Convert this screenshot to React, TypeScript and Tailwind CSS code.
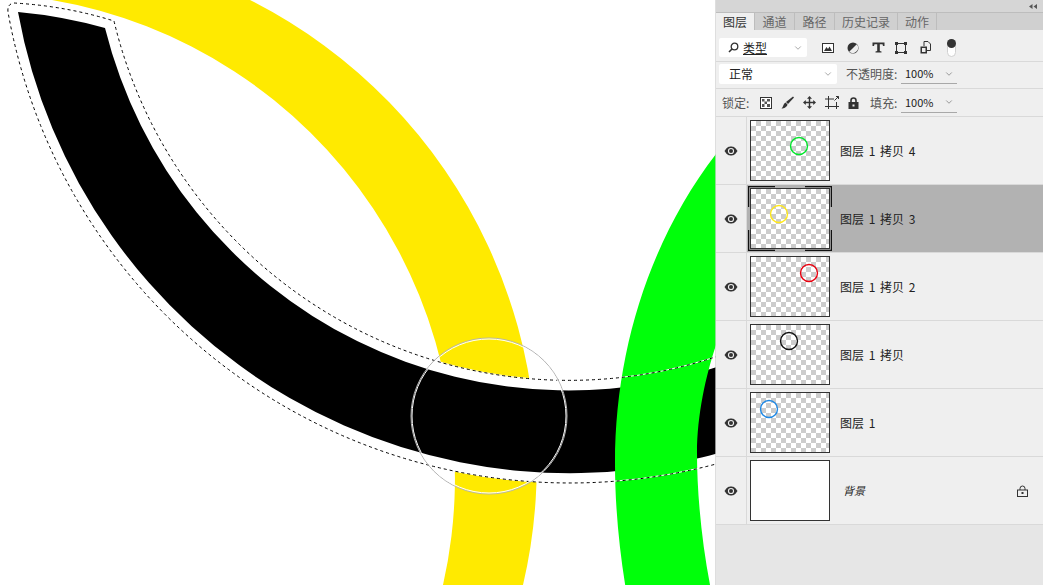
import React from "react";
import { ChevronDown } from "lucide-react";

const FONT = '"Noto Sans CJK SC", "Noto Sans", sans-serif';

interface Layer {
  name: string;
  ring?: string;
  cx?: number;
  cy?: number;
  selected?: boolean;
  background?: boolean;
}

const layers: Layer[] = [
  { name: "图层 1 拷贝 4", ring: "#00e62a", cx: 48, cy: 25 },
  { name: "图层 1 拷贝 3", ring: "#ffe81a", cx: 28, cy: 25, selected: true },
  { name: "图层 1 拷贝 2", ring: "#e8000f", cx: 58, cy: 16 },
  { name: "图层 1 拷贝", ring: "#111111", cx: 38, cy: 16 },
  { name: "图层 1", ring: "#1e88e5", cx: 18, cy: 16 },
  { name: "背景", background: true },
];

function Canvas() {
  const blackBand =
    "M18 12 Q62 16 105 28 A478 478 0 0 0 760 350.6 L760 440 A561 561 0 0 1 18 12 Z";
  const marquee =
    "M14 3 Q66 6 114 21 A468 468 0 0 0 760 339.7 M760 450.5 A571 571 0 0 1 8 12 Q7 4 14 3";
  return (
    <svg width="716" height="585" viewBox="0 0 716 585" className="block shrink-0 bg-white">
      <path d="M52 0 L250 0 A522 522 0 0 1 523 585 L443 585 A485 485 0 0 0 52 0 Z" fill="#ffea00" />
      <path d={blackBand} fill="#000" stroke="#fff" strokeWidth="20" strokeLinejoin="round" />
      <path d={blackBand} fill="#000" />
      <path
        d="M716 154 C650 240 615 350 615 463 C615 505 619 548 626 590 L711 590 C702 545 697 495 697 453 C697 415 706 375 716 345 Z"
        fill="#00ff0a"
      />
      <path d={marquee} fill="none" stroke="#fff" strokeWidth="1" />
      <path d={marquee} fill="none" stroke="#000" strokeWidth="1" strokeDasharray="3 3" />
      <circle cx="489" cy="416" r="78" fill="none" stroke="#b4b4b4" strokeWidth="1" />
      <circle cx="489" cy="416" r="77" fill="none" stroke="#fff" strokeWidth="1" />
      <rect x="715" y="0" width="1" height="585" fill="#d0d0d0" fillOpacity="0.7" />
    </svg>
  );
}

function EyeIcon() {
  return (
    <svg width="14" height="10" viewBox="0 0 14 10">
      <path d="M0.5 5 C3 1 5 0.5 7 0.5 C9 0.5 11 1 13.5 5 C11 9 9 9.5 7 9.5 C5 9.5 3 9 0.5 5 Z" fill="#333" />
      <circle cx="7" cy="5" r="3.1" fill="#eee" />
      <circle cx="7" cy="5" r="2" fill="#333" />
    </svg>
  );
}

function ToolIcons() {
  return (
    <div className="ml-[15px] flex h-[19px] items-center gap-[13px]">
      <svg width="12" height="10" viewBox="0 0 12 10">
        <rect x="0.5" y="0.5" width="11" height="9" fill="#fff" stroke="#333" />
        <path d="M2 8 L4.5 4 L6 6 L7.5 3.5 L10 8 Z" fill="#333" />
      </svg>
      <svg width="12" height="12" viewBox="0 0 12 12">
        <circle cx="6" cy="6" r="5.5" fill="#333" />
        <path d="M9.8 2.2 A5.4 5.4 0 0 1 2.2 9.8 Z" fill="#eee" />
      </svg>
      <svg width="13" height="11" viewBox="0 0 13 11">
        <path d="M0.5 0.5 H12.5 V4 H11 L10.5 2.2 H7.8 V9 L9.5 9.4 V10.5 H3.5 V9.4 L5.2 9 V2.2 H2.5 L2 4 H0.5 Z" fill="#333" />
      </svg>
      <svg width="12" height="12" viewBox="0 0 12 12" className="ml-[-3px]">
        <rect x="1.5" y="1.5" width="9" height="9" fill="none" stroke="#333" />
        <rect x="0" y="0" width="3" height="3" fill="#333" />
        <rect x="9" y="0" width="3" height="3" fill="#333" />
        <rect x="0" y="9" width="3" height="3" fill="#333" />
        <rect x="9" y="9" width="3" height="3" fill="#333" />
      </svg>
      <svg width="11" height="13" viewBox="0 0 11 13">
        <path d="M4 5 V0.5 H8 L10.5 3 V9.5 H7" fill="none" stroke="#333" />
        <rect x="0.5" y="5.5" width="6.5" height="7" fill="#333" />
        <rect x="2" y="7" width="3.5" height="4" fill="#eee" />
      </svg>
    </div>
  );
}

function LockIcons() {
  return (
    <div className="flex items-center gap-[9px]">
      <svg width="12" height="12" viewBox="0 0 12 12">
        <rect x="0.5" y="0.5" width="11" height="11" fill="#fff" stroke="#333" />
        <path d="M2 2 H4.5 V4.5 H2 Z M7 2 H10 V4.5 H7 Z M4.5 4.5 H7 V7 H4.5 Z M2 7 H4.5 V10 H2 Z M7 7 H10 V10 H7 Z" fill="#555" />
      </svg>
      <svg width="13" height="13" viewBox="0 0 13 13">
        <path d="M12 0.5 L13 1.5 L7 8 L5 6 Z" fill="#333" />
        <path d="M4.5 6.5 L6.5 8.5 C6 11 3 12.5 0.5 12.5 C2.5 11 2 8 4.5 6.5 Z" fill="#333" />
      </svg>
      <svg width="13" height="13" viewBox="0 0 13 13">
        <path d="M6.5 0 L9 2.8 H7.2 V5.8 H10.2 V4 L13 6.5 L10.2 9 V7.2 H7.2 V10.2 H9 L6.5 13 L4 10.2 H5.8 V7.2 H2.8 V9 L0 6.5 L2.8 4 V5.8 H5.8 V2.8 H4 Z" fill="#333" />
      </svg>
      <svg width="14" height="13" viewBox="0 0 14 13">
        <path d="M3.5 0 V13 M11.5 6 V13 M0 3 H9 M0 10.5 H14" fill="none" stroke="#333" />
        <path d="M9.5 4.5 L13.5 0.5 M11 0.5 H13.5 V3" fill="none" stroke="#333" />
      </svg>
      <svg width="11" height="12" viewBox="0 0 11 12">
        <path d="M3 5 V3.5 A2.5 2.5 0 0 1 8 3.5 V5" fill="none" stroke="#333" strokeWidth="1.6" />
        <rect x="0.5" y="5" width="10" height="7" fill="#333" />
        <rect x="4.5" y="7.5" width="2" height="2" fill="#eee" />
      </svg>
    </div>
  );
}

function Thumb({ layer }: { layer: Layer }) {
  return (
    <div className="relative h-[61px] w-[80px] shrink-0">
      {layer.background ? (
        <div className="h-full w-full border border-[#333] bg-white" />
      ) : (
        <div className="relative h-full w-full border border-[#333] bg-[repeating-conic-gradient(#cccccc_0_25%,#ffffff_0_50%)] bg-[length:10px_10px]">
          <svg width="78" height="59" viewBox="0 0 78 59" className="absolute left-0 top-0">
            <circle cx={layer.cx} cy={layer.cy} r="8.5" fill="none" stroke={layer.ring} strokeWidth="1.4" />
          </svg>
        </div>
      )}
      {layer.selected && (
        <svg width="84" height="65" viewBox="0 0 84 65" className="absolute left-[-2px] top-[-2px]">
          <path
            d="M0.5 21 V0.5 H27 M57 0.5 H83.5 V21 M83.5 44 V64.5 H57 M27 64.5 H0.5 V44"
            fill="none"
            stroke="#111"
            strokeWidth="1.4"
          />
        </svg>
      )}
    </div>
  );
}

function LayerRow({ layer }: { layer: Layer }) {
  return (
    <div className="flex h-[68px] border-b border-[#d9d9d9]">
      <div className="flex w-[31px] shrink-0 items-center justify-center border-r border-[#d9d9d9]">
        <EyeIcon />
      </div>
      <div className={`flex flex-1 items-center pl-[3px] ${layer.selected ? "bg-[#b2b2b2]" : ""}`}>
        <Thumb layer={layer} />
        {layer.background ? (
          <span className="ml-[13px] text-[11px] italic text-[#222]">{layer.name}</span>
        ) : (
          <span className="ml-[10px] text-[12px] text-[#222] [word-spacing:2px]">{layer.name}</span>
        )}
        {layer.background && (
          <svg width="11" height="12" viewBox="0 0 11 12" className="ml-auto mr-[15px]">
            <path d="M3 5 V3.5 A2.5 2.5 0 0 1 8 3.5 V5" fill="none" stroke="#333" />
            <rect x="0.5" y="5" width="10" height="6.5" fill="none" stroke="#333" />
            <rect x="4.5" y="7" width="2" height="2" fill="#333" />
          </svg>
        )}
      </div>
    </div>
  );
}

function Percent() {
  return (
    <div className="flex h-[20px] w-[56px] items-center justify-between border-b border-[#a8a8a8] pl-[4px] pr-[3px] text-[11px] text-[#222]">
      <span>100%</span>
      <ChevronDown size={10} color="#888" />
    </div>
  );
}

export default function App() {
  const tabs = ["图层", "通道", "路径", "历史记录", "动作"];
  const widths = ["w-[39px]", "w-[40px]", "w-[40px]", "w-[63px]", "w-[39px]"];
  return (
    <div className="flex h-[585px] w-[1043px] overflow-hidden" style={{ fontFamily: FONT }}>
      <Canvas />
      <div className="flex w-[327px] shrink-0 flex-col bg-[#e6e6e6]">
        <div className="flex h-[13px] items-center justify-end border-b border-[#bdbdbd] bg-[#d6d6d6] pr-[6px]">
          <svg width="8" height="5" viewBox="0 0 8 5">
            <path d="M3.5 0 V5 L0 2.5 Z M8 0 V5 L4.5 2.5 Z" fill="#555" />
          </svg>
        </div>
        <div className="flex h-[17px] bg-[#d0d0d0]">
          {tabs.map((tab, i) => (
            <div
              key={tab}
              className={`flex ${widths[i]} items-center justify-center border-r border-[#bdbdbd] text-[12px] leading-none ${
                i === 0 ? "bg-[#efefef] text-[#333]" : "text-[#666]"
              }`}
            >
              {tab}
            </div>
          ))}
        </div>

        <div className="flex h-[32px] items-start border-b border-[#d9d9d9] bg-[#efefef] pl-[3px] pt-[8px]">
          <div className="flex h-[19px] w-[88px] items-center justify-between rounded-[2px] bg-white pl-[9px] pr-[4px] text-[12px] text-[#222]">
            <span className="flex items-center gap-[4px]">
              <svg width="11" height="11" viewBox="0 0 11 11">
                <circle cx="6.5" cy="4.5" r="3.3" fill="none" stroke="#333" strokeWidth="1.3" />
                <path d="M4 7 L1 10" stroke="#333" strokeWidth="1.6" />
              </svg>
              <span className="underline">类型</span>
            </span>
            <ChevronDown size={10} color="#999" />
          </div>
          <ToolIcons />
          <div className="relative ml-[16px] mt-[1px] h-[18px] w-[9px] rounded-full border border-[#d0d0d0] bg-white">
            <div className="absolute left-[-1px] top-[-1px] h-[9px] w-[9px] rounded-full bg-[#333]" />
          </div>
        </div>

        <div className="flex h-[27px] items-start border-b border-[#d9d9d9] bg-[#efefef] pl-[3px] pt-[2px]">
          <div className="flex h-[20px] w-[118px] items-center justify-between rounded-[2px] bg-white pl-[10px] pr-[4px] text-[12px] text-[#222]">
            <span>正常</span>
            <ChevronDown size={10} color="#999" />
          </div>
          <span className="ml-[9px] h-[20px] w-[55px] text-[12px] leading-[20px] text-[#555]">不透明度:</span>
          <Percent />
        </div>

        <div className="flex h-[28px] items-center border-b border-[#d9d9d9] bg-[#efefef] pl-[6px]">
          <span className="w-[38px] text-[12px] text-[#555]">锁定:</span>
          <LockIcons />
          <span className="ml-[11px] w-[31px] text-[12px] text-[#555]">填充:</span>
          <Percent />
        </div>

        <div className="bg-[#efefef]">
          {layers.map((layer) => (
            <LayerRow key={layer.name} layer={layer} />
          ))}
        </div>
      </div>
    </div>
  );
}
